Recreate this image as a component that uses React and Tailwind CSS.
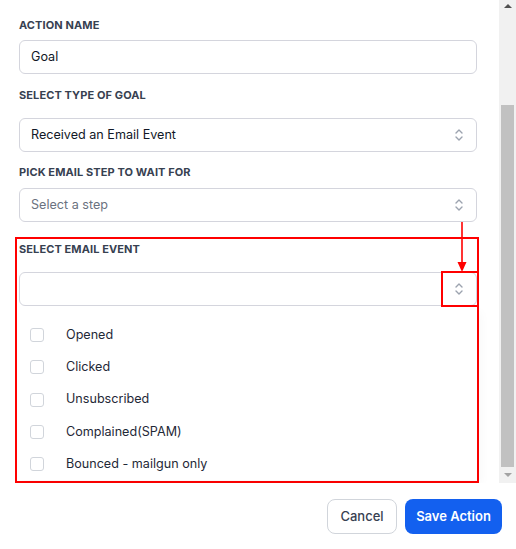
import React from 'react';

const Chevrons = () => (
  <svg width="10" height="14" viewBox="0 0 10 14" fill="none" stroke="#9ca3af" strokeWidth="1.4" strokeLinecap="round" strokeLinejoin="round">
    <path d="M2 5 L5 2 L8 5" />
    <path d="M2 9 L5 12 L8 9" />
  </svg>
);

const Label = ({ children, className = '' }) => (
  <div className={`text-[11px] leading-4 font-bold uppercase tracking-[0.1px] text-[#374151] ${className}`}>{children}</div>
);

const SelectBox = ({ value, placeholder, className = '' }) => (
  <div className={`h-[34px] w-[458px] rounded-md border border-[#d4d5dd] bg-white flex items-center justify-between pl-[11px] pr-[12px] ${className}`}>
    <span className={`text-[12.6px] ${value ? 'text-[#111827]' : 'text-[#6b7280]'}`}>{value || placeholder}</span>
    <Chevrons />
  </div>
);

const events = ['Opened', 'Clicked', 'Unsubscribed', 'Complained(SPAM)', 'Bounced - mailgun only'];

export default function App() {
  return (
    <div className="relative w-[516px] h-[549px] bg-white font-['Inter',sans-serif]">
      <div className="flex h-[483px]">
        {/* scroll area */}
        <div className="flex-1 overflow-hidden pt-[17px]">
          <Label className="ml-[19px]">Action Name</Label>
          <div className="ml-[19px] mt-[7px] h-[34px] w-[458px] rounded-md border border-[#d4d5dd] flex items-center pl-[11px]">
            <span className="text-[12.6px] text-[#111827]">Goal</span>
          </div>

          <Label className="ml-[19px] mt-[13px]">Select type of goal</Label>
          <SelectBox className="ml-[19px] mt-[15px]" value="Received an Email Event" />

          <Label className="ml-[19px] mt-3">Pick email step to wait for</Label>
          <SelectBox className="ml-[19px] mt-2" placeholder="Select a step" />

          <div className="ml-[15px] mt-[15px] w-[464px] border-2 border-[#ff0000] pl-[2px] pt-[2px] pb-[1px]">
            <Label>Select email event</Label>
            <SelectBox className="mt-[15px]" />
            <div className="w-[458px] pt-[13px] shadow-[4px_6px_10px_rgba(0,0,0,0.03)]">
              {events.map((e) => (
                <div key={e} className="h-[32.3px] flex items-center pl-[11px]">
                  <div className="w-[14px] h-[14px] rounded-[3px] border border-[#d1d5db] bg-white" />
                  <span className="ml-[22px] text-[12.6px] text-[#1f2937]">{e}</span>
                </div>
              ))}
            </div>
          </div>
        </div>

        {/* scrollbar */}
        <div className="w-[17px] bg-[#f1f1f1] flex flex-col items-center">
          <div className="h-[12px] flex items-center justify-center">
            <div className="w-0 h-0 border-l-[4px] border-r-[4px] border-b-[4px] border-l-transparent border-r-transparent border-b-[#505050]" />
          </div>
          <div className="mt-[93px] w-[13px] h-[362px] bg-[#c1c1c1]" />
          <div className="flex-1 flex items-center justify-center">
            <div className="w-0 h-0 border-l-[4px] border-r-[4px] border-t-[4px] border-l-transparent border-r-transparent border-t-[#a3a3a3]" />
          </div>
        </div>
      </div>

      {/* footer */}
      <div className="flex justify-end gap-2 pr-[14px] pt-4">
        <button className="w-[70px] h-[35px] rounded-lg border border-[#d1d5db] bg-white text-[13px] font-medium text-[#374151]">Cancel</button>
        <button className="w-[97px] h-[35px] rounded-lg bg-[#1360ef] text-[13px] font-semibold text-white">Save Action</button>
      </div>

      {/* annotation: arrow + chevron box */}
      <svg className="absolute left-[456px] top-[222px]" width="12" height="51" viewBox="0 0 12 51">
        <line x1="6" y1="0" x2="6" y2="41" stroke="#ff0000" strokeWidth="1.6" />
        <path d="M1.5 40 L10.5 40 L6 50 Z" fill="#ff0000" />
      </svg>
      <div className="absolute left-[441px] top-[271px] w-[38px] h-[36px] border-2 border-[#ff0000]" />
    </div>
  );
}
